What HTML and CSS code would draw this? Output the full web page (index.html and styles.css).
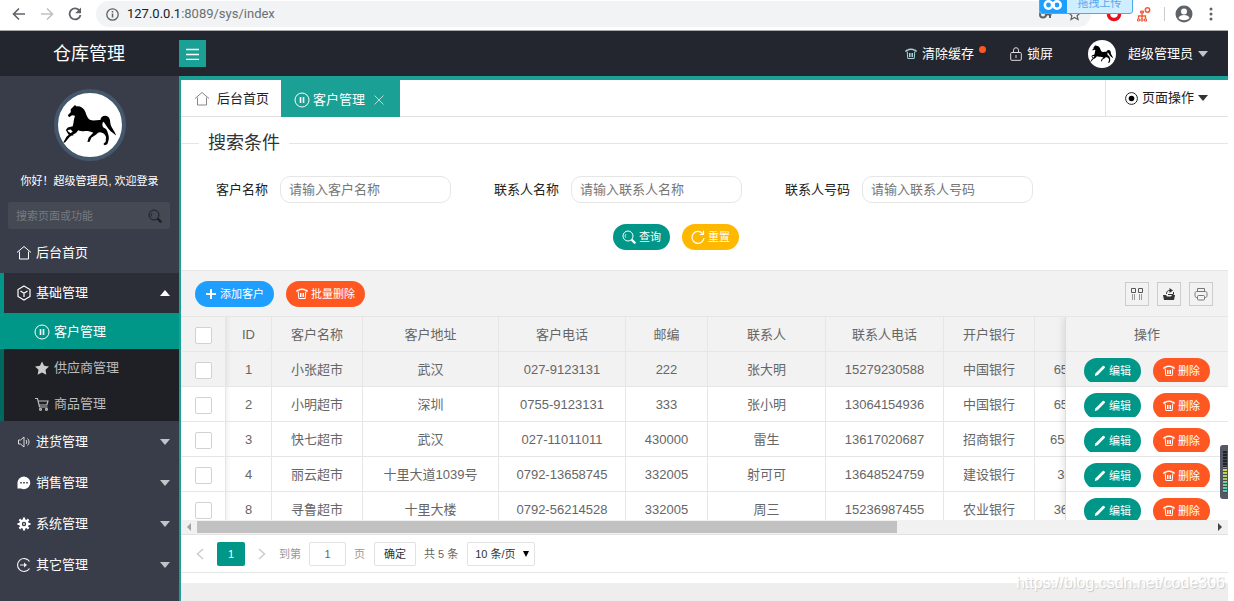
FILE: index.html
```html
<!DOCTYPE html>
<html lang="zh-CN">
<head>
<meta charset="utf-8">
<title>仓库管理</title>
<link rel="stylesheet" href="styles.css">
</head>
<body>
<svg class="defs" aria-hidden="true">
  <symbol id="horse" viewBox="170 38 196 196"><path d="M222 75l5 4c12-1 22 5 27 17 3 10 7 20 15 25 11 3 22-1 31 0 0-8 6-13 15-13 11 1 15 10 15 21 2 15 12 21 18 39-12-8-23-17-29-28-5-7-6-12-11-14-3 5-3 13 1 18 9 4 12 9 14 18 3 8 4 15 1 24l-3 9-8 3-4-4 7-7 1-14c-3-10-10-14-18-15-6 0-9 3-12 7l-15 10-5 12-7 1 4-14 14-14c-8-4-18-6-28-5-8 0-13-1-18-3l-6 8-20 12-14 17-7 3 11-20 19-16-6-6-10 1 3 6 14 9 1 3-15-4-8-14 6-7 15-4c3-9 3-20 7-32l-9-2-9 6-4-6 9-9 0-9z"/></symbol>
  <symbol id="home" viewBox="0 0 16 16"><path d="M1 7.500L8 1.500l7 6M3.500 6.500v7.500h9V6.500" fill="none" stroke="currentColor"/></symbol>
  <symbol id="pause" viewBox="0 0 16 16"><circle cx="8" cy="8" r="7" fill="none" stroke="currentColor"/><path d="M6.500 5v6M9.500 5v6" stroke="currentColor" stroke-width="1.600"/></symbol>
  <symbol id="trash" viewBox="0 0 12 12"><path d="M2.200 3.500l.6 7h6.400l.6-7M4.500 5v4M6 5v4M7.500 5v4" fill="none" stroke="currentColor"/><path d="M.8 3.800C.8 2.500 2 2 3 2c.5-1 5.500-1 6 0 1 0 2.200.5 2.200 1.800" fill="none" stroke="currentColor" stroke-width="1.400"/></symbol>
  <symbol id="search" viewBox="0 0 14 14"><circle cx="6" cy="6" r="5" fill="none" stroke="currentColor"/><path d="M3.500 7.500a3 3 0 0 1 .5-3.500" fill="none" stroke="currentColor" stroke-width=".8"/><path d="M10.300 10.300l2.300 2.300" stroke="currentColor" stroke-width="2.400" stroke-linecap="round"/></symbol>
  <symbol id="pencil" viewBox="0 0 12 12"><path d="M.8 11.200l.8-3L9 .8c.8-.5 2.400 1 1.900 1.900L3.800 10z" fill="currentColor"/></symbol>
</svg>

<div class="browser">
  <svg class="nav-icon" viewBox="0 0 14 14"><path d="M13 7H2M7 1.500L1.500 7 7 12.500" fill="none" stroke="#5f6368" stroke-width="1.600"/></svg>
  <svg class="nav-icon" viewBox="0 0 14 14"><path d="M1 7h11M7 1.500L12.500 7 7 12.500" fill="none" stroke="#bfc1c4" stroke-width="1.600"/></svg>
  <svg class="nav-icon" viewBox="0 0 14 14"><path d="M11.800 4A5.500 5.500 0 1 0 12.500 8" fill="none" stroke="#5f6368" stroke-width="1.800"/><path d="M13 .5v5.800H7.200z" fill="#5f6368"/></svg>
  <div class="address">
    <svg width="13" height="13" viewBox="0 0 13 13"><circle cx="6.500" cy="6.500" r="5.700" fill="none" stroke="#5f6368" stroke-width="1.300"/><path d="M6.500 5.600v4M6.500 3v1.400" stroke="#5f6368" stroke-width="1.500"/></svg>
    <span class="url"><b>127.0.0.1</b>:8089/sys/index</span>
    <svg class="key" width="13" height="13" viewBox="0 0 13 13"><circle cx="4" cy="6.500" r="3" fill="none" stroke="#5f6368" stroke-width="2"/><path d="M7 6.500h5.500M11 7v3" stroke="#5f6368" stroke-width="2"/></svg>
    <svg width="13" height="13" viewBox="0 0 14 14"><path d="M7 1l1.800 4 4.200.4-3.200 2.900 1 4.200L7 10.300l-3.800 2.200 1-4.200L1 5.400 5.200 5z" fill="none" stroke="#5f6368" stroke-width="1.300"/></svg>
  </div>
  <svg width="16" height="16" viewBox="0 0 16 16"><circle cx="8" cy="8" r="5.500" fill="none" stroke="#e8101c" stroke-width="3.500"/></svg>
  <svg width="15" height="15" viewBox="0 0 15 15" fill="none" stroke="#f25a38"><circle cx="11.500" cy="3" r="2.200" stroke-width="1.500"/><path d="M6 4v3M2.500 12V9h7v3M6 7v5" stroke-width="1.300"/><path d="M4.500 4h3v2h-3zM1.500 12h2v2h-2zM5 12h2v2H5zM8.500 12h2v2h-2z"/></svg>
  <i class="bar-sep"></i>
  <svg width="18" height="18" viewBox="0 0 18 18"><circle cx="9" cy="9" r="8.500" fill="#5f6368"/><circle cx="9" cy="6.500" r="3" fill="#fff"/><path d="M3.500 13c1-4 10-4 11 0-2.500 3-8.500 3-11 0z" fill="#fff"/></svg>
  <svg class="dots" width="4" height="14" viewBox="0 0 4 14" fill="#5f6368"><circle cx="2" cy="2" r="1.500"/><circle cx="2" cy="7" r="1.500"/><circle cx="2" cy="12" r="1.500"/></svg>
  <div class="upload">
    <span class="upload-logo"><svg width="20" height="12" viewBox="0 0 20 12" fill="none" stroke="#fff" stroke-width="2.500"><circle cx="5.500" cy="7" r="3.700"/><circle cx="14" cy="7" r="3.700"/><path d="M8 4c1 0 3 5 4 5"/></svg></span>
    <span class="upload-text">拖拽上传</span>
  </div>
</div>

<header class="topbar">
  <h1 class="logo">仓库管理</h1>
  <button class="burger" aria-label="折叠菜单"><svg width="13" height="12" viewBox="0 0 13 12"><path d="M0 1.500h13M0 6.500h13M0 11.500h13" stroke="#fff" stroke-width="1.400"/></svg></button>
  <nav class="topnav">
    <a href="#" class="clear"><svg class="i12 aqua"><use href="#trash"/></svg>清除缓存<i class="dot"></i></a>
    <a href="#" class="lock"><svg width="12" height="14" viewBox="0 0 12 14" fill="none" stroke="#ddd"><rect x=".7" y="5.500" width="10.600" height="7.800" rx="1"/><path d="M3.500 5.500V3.200a2.500 2.500 0 0 1 5 0v2.300M6 8v3"/></svg>锁屏</a>
    <a href="#" class="user"><span class="face"><svg><use href="#horse"/></svg></span>超级管理员<i class="tri"></i></a>
  </nav>
</header>

<div class="layout">
  <aside class="side">
    <div class="avatar"><svg><use href="#horse"/></svg></div>
    <p class="hello">你好！超级管理员, 欢迎登录</p>
    <div class="side-search">
      <input type="text" placeholder="搜索页面或功能" aria-label="搜索页面或功能">
      <svg class="i14"><use href="#search"/></svg>
    </div>
    <nav class="menu">
      <a href="#"><svg class="i16"><use href="#home"/></svg>后台首页</a>
      <a href="#" class="open"><svg class="i16" viewBox="0 0 16 16" fill="none" stroke="#fff" stroke-width="1.200"><path d="M8 1l6 3.500v7L8 15l-6-3.500v-7zM4.500 6L8 8.200 11.500 6M8 8.200V12"/></svg>基础管理<i class="tri up"></i></a>
      <div class="sub">
        <a href="#" class="on"><svg class="i16"><use href="#pause"/></svg>客户管理</a>
        <a href="#"><svg class="i16" viewBox="0 0 16 16"><path d="M8 1.500l2.100 4.300 4.900.7-3.500 3.300.8 4.900L8 12.500l-4.300 2.200.8-4.900L1 6.500l4.900-.7z" fill="#ccc"/></svg>供应商管理</a>
        <a href="#"><svg class="i16" viewBox="0 0 16 16" fill="none" stroke="#bbb" stroke-width="1.200"><path d="M1 2.500h2.500l2 8.500h8M4.200 5H14l-1.200 4H5"/><circle cx="6.500" cy="13.300" r="1"/><circle cx="12.500" cy="13.300" r="1"/></svg>商品管理</a>
      </div>
      <a href="#"><svg class="i16" viewBox="0 0 16 16" fill="none" stroke="#ddd"><path d="M2.500 6h2L8 3v10L4.500 10h-2zM10 6c1 1 1 3 0 4M11.500 4.500c2 2 2 5 0 7"/></svg>进货管理<i class="tri"></i></a>
      <a href="#"><svg class="i16" viewBox="0 0 16 16"><path d="M8 1.500a6.500 6.300 0 1 1-3 12H1.500v-6A6.500 6.300 0 0 1 8 1.500z" fill="#fff"/><path d="M4.200 7.800h1.600M7.200 7.800h1.600M10.200 7.800h1.600" stroke="#393d49" stroke-width="1.500"/></svg>销售管理<i class="tri"></i></a>
      <a href="#"><svg class="i16" viewBox="0 0 16 16" fill="none" stroke="#fff"><circle cx="8" cy="8" r="3.500" stroke-width="2.600"/><path d="M8 1.500v2.500M8 12v2.500M1.500 8H4M12 8h2.500M3.400 3.400l1.800 1.800M10.800 10.800l1.800 1.800M3.400 12.600l1.800-1.800M10.800 5.200l1.800-1.800" stroke-width="2.200"/><circle cx="8" cy="8" r=".5"/></svg>系统管理<i class="tri"></i></a>
      <a href="#"><svg class="i16" viewBox="0 0 16 16" fill="none" stroke="#eee" stroke-width="1.200"><path d="M13.500 4.500a6.500 6.500 0 1 0 0 7M4 8h5"/><path d="M8 5.500L11 8l-3 2.500z" fill="#eee" stroke="none"/></svg>其它管理<i class="tri"></i></a>
    </nav>
  </aside>

  <main class="main">
    <div class="tabs">
      <a href="#" class="tab"><svg class="i16 soft"><use href="#home"/></svg>后台首页</a>
      <a href="#" class="tab active"><svg class="i16"><use href="#pause"/></svg>客户管理<svg class="close" width="10" height="10" viewBox="0 0 10 10"><path d="M.5.5l9 9M9.500.5l-9 9" stroke="#b9d9d6"/></svg></a>
      <a href="#" class="page-op"><svg width="13" height="13" viewBox="0 0 13 13"><circle cx="6.500" cy="6.500" r="5.900" fill="none" stroke="#222"/><circle cx="6.500" cy="6.500" r="2.800"/></svg>页面操作<i class="tri dark"></i></a>
    </div>

    <form class="search">
      <h2 class="legend">搜索条件</h2>
      <div class="fields">
        <label for="cname">客户名称</label><input id="cname" type="text" placeholder="请输入客户名称">
        <label for="pname">联系人名称</label><input id="pname" type="text" placeholder="请输入联系人名称">
        <label for="pphone">联系人号码</label><input id="pphone" type="text" placeholder="请输入联系人号码">
      </div>
      <div class="actions">
        <button type="button" class="btn green"><svg class="i14"><use href="#search"/></svg>查询</button>
        <button type="button" class="btn amber"><svg class="i14" viewBox="0 0 14 14"><path d="M12 4A6 6 0 1 0 13 8M12.500 .8v3.700H8.800" fill="none" stroke="#fff" stroke-width="1.200"/></svg>重置</button>
      </div>
    </form>

    <div class="toolbar">
      <button class="btn blue"><svg class="i12" viewBox="0 0 12 12"><path d="M6 1v10M1 6h10" stroke="#fff" stroke-width="2"/></svg>添加客户</button>
      <button class="btn red"><svg class="i12"><use href="#trash"/></svg>批量删除</button>
      <div class="tools">
        <button aria-label="筛选列"><svg width="14" height="14" viewBox="0 0 14 14" fill="none" stroke="#555"><path d="M1.500 1.500h4v4h-4zM8.500 1.500h4v4h-4z"/><path d="M2.500 7v6M4.500 7v6M9.500 7v6M11.500 7v6" stroke="#999"/></svg></button>
        <button aria-label="导出"><svg width="14" height="14" viewBox="0 0 14 14"><path d="M1 8h3l1 1.500h4L10 8h3l-1 5H2z" fill="#333"/><path d="M4.500 7C4.500 4 6 3.500 8 3.500" fill="none" stroke="#333"/><path d="M7.500 1L11 3.500 7.500 6z" fill="#333"/><path d="M6 7.500h5.500V5" fill="none" stroke="#333"/></svg></button>
        <button aria-label="打印"><svg width="14" height="14" viewBox="0 0 14 14" fill="none" stroke="#777"><path d="M3.500 4.500v-3h7v3M3.500 10.500h-1c-1 0-1.500-1-1.500-2V6.500c0-1 .5-2 1.500-2h9c1 0 1.500 1 1.500 2v2c0 1-.5 2-1.500 2h-1"/><rect x="3.500" y="8.500" width="7" height="4.500" rx="1"/></svg></button>
      </div>
    </div>

    <div class="grid">
      <div class="grid-scroll">
        <table class="data">
          <colgroup><col class="c45"><col class="c46"><col class="c91"><col class="c136"><col class="c127"><col class="c82"><col class="c118"><col class="c118"><col class="c91"><col class="c60"></colgroup>
          <thead><tr><th><input type="checkbox" aria-label="全选"></th><th>ID</th><th>客户名称</th><th>客户地址</th><th>客户电话</th><th>邮编</th><th>联系人</th><th>联系人电话</th><th>开户银行</th><th></th></tr></thead>
          <tbody>
            <tr class="hover"><td><input type="checkbox" aria-label="选择 1"></td><td>1</td><td>小张超市</td><td>武汉</td><td>027-9123131</td><td>222</td><td>张大明</td><td>15279230588</td><td>中国银行</td><td>654</td></tr>
            <tr><td><input type="checkbox" aria-label="选择 2"></td><td>2</td><td>小明超市</td><td>深圳</td><td>0755-9123131</td><td>333</td><td>张小明</td><td>13064154936</td><td>中国银行</td><td>654</td></tr>
            <tr><td><input type="checkbox" aria-label="选择 3"></td><td>3</td><td>快七超市</td><td>武汉</td><td>027-11011011</td><td>430000</td><td>雷生</td><td>13617020687</td><td>招商银行</td><td>6543</td></tr>
            <tr><td><input type="checkbox" aria-label="选择 4"></td><td>4</td><td>丽云超市</td><td>十里大道1039号</td><td>0792-13658745</td><td>332005</td><td>射可可</td><td>13648524759</td><td>建设银行</td><td>36</td></tr>
            <tr><td><input type="checkbox" aria-label="选择 8"></td><td>8</td><td>寻鲁超市</td><td>十里大楼</td><td>0792-56214528</td><td>332005</td><td>周三</td><td>15236987455</td><td>农业银行</td><td>365</td></tr>
          </tbody>
        </table>
      </div>
      <div class="grid-fixed">
        <table class="ops">
          <thead><tr><th>操作</th></tr></thead>
          <tbody>
            <tr class="hover"><td><div class="cell"><button class="btn green"><svg class="i12"><use href="#pencil"/></svg>编辑</button><button class="btn red"><svg class="i12"><use href="#trash"/></svg>删除</button></div></td></tr>
            <tr><td><div class="cell"><button class="btn green"><svg class="i12"><use href="#pencil"/></svg>编辑</button><button class="btn red"><svg class="i12"><use href="#trash"/></svg>删除</button></div></td></tr>
            <tr><td><div class="cell"><button class="btn green"><svg class="i12"><use href="#pencil"/></svg>编辑</button><button class="btn red"><svg class="i12"><use href="#trash"/></svg>删除</button></div></td></tr>
            <tr><td><div class="cell"><button class="btn green"><svg class="i12"><use href="#pencil"/></svg>编辑</button><button class="btn red"><svg class="i12"><use href="#trash"/></svg>删除</button></div></td></tr>
            <tr><td><div class="cell"><button class="btn green"><svg class="i12"><use href="#pencil"/></svg>编辑</button><button class="btn red"><svg class="i12"><use href="#trash"/></svg>删除</button></div></td></tr>
          </tbody>
        </table>
      </div>
    </div>
    <div class="hscroll"><i class="arrow left"></i><div class="track"><div class="thumb"></div></div><i class="arrow right"></i></div>

    <div class="pager">
      <a href="#" class="step" aria-label="上一页"><svg width="8" height="12" viewBox="0 0 8 12"><path d="M7 1L1.500 6 7 11" fill="none" stroke="#ccc" stroke-width="1.500"/></svg></a>
      <a href="#" class="current">1</a>
      <a href="#" class="step" aria-label="下一页"><svg width="8" height="12" viewBox="0 0 8 12"><path d="M1 1l5.500 5L1 11" fill="none" stroke="#ccc" stroke-width="1.500"/></svg></a>
      <label class="jump">到第<input type="text" value="1">页</label>
      <button class="ok">确定</button>
      <span class="count">共 5 条</span>
      <span class="size"><select aria-label="每页条数"><option>10 条/页</option></select><i></i></span>
    </div>
    <footer class="foot"></footer>
  </main>
</div>
<div class="meter"><i></i></div>
<div class="mark">https://blog.csdn.net/code306</div>
</body>
</html>
```
FILE: styles.css
```css
* { box-sizing: border-box; }
body {
  margin: 0; padding-right: 6px; height: 100vh; overflow: hidden;
  display: flex; flex-direction: column; position: relative; background: #fff;
  font: 13px/20px "Liberation Sans", "Noto Sans CJK SC", sans-serif; color: #333;
}
a { color: inherit; text-decoration: none; }
button, input, select { font: inherit; color: inherit; margin: 0; padding: 0; }
h1, h2, p { margin: 0; font-weight: 400; }
svg { flex: none; display: block; }
.defs { position: absolute; width: 0; height: 0; }
.i12 { width: 12px; height: 12px; }
.i14 { width: 14px; height: 14px; }
.i16 { width: 16px; height: 16px; }

/* browser bar */
.browser {
  position: relative; flex: none; height: 31px; padding: 0 16px 2px 12px;
  display: flex; align-items: center; gap: 15px; border-bottom: 1px solid #a9a9ac;
}
.nav-icon { width: 14px; height: 14px; }
.address {
  flex: 1; height: 26px; padding: 0 10px; border-radius: 13px;
  background: #f1f3f4; display: flex; align-items: center; gap: 8px;
}
.url { font-family: Roboto, sans-serif; color: #6b6f73; }
.url b { font-weight: 400; color: #202124; }
.key { margin-left: auto; }
.address .key + svg { margin-left: 8px; }
.browser > svg { margin-right: -1px; }
.bar-sep { width: 1px; height: 14px; background: #ccc; margin: 0 -5px 0 -1px; }
.browser .dots { margin-left: 2px; }
.upload {
  position: absolute; top: -10px; right: 95px; width: 94px; height: 24px; display: flex;
  border: 1px solid #4ea9f5; border-radius: 3px; background: #cfeeff; overflow: hidden;
}
.upload-logo { width: 27px; padding: 7px 3px; background: #1e9fff; }
.upload-text { flex: 1; text-align: center; font-size: 11px; line-height: 24px; color: #56a9ee; }

/* header */
.topbar { flex: none; height: 45px; display: flex; align-items: center; background: #23262e; color: #fff; }
.logo { width: 178px; margin-right: 1px; text-align: center; font-size: 18px; line-height: 26px; }
.burger { width: 27px; height: 27px; border: 0; background: #1aa094; display: grid; place-items: center; }
.topnav { margin-left: auto; display: flex; align-items: center; padding-right: 20px; }
.topnav a { display: flex; align-items: center; gap: 5px; }
.aqua { color: #a9d5da; }
.dot { width: 7px; height: 7px; border-radius: 50%; background: #ff5722; margin-bottom: 8px; }
.lock { margin-left: 24px; }
.user { margin-left: 35px; }
.face { width: 28px; height: 28px; border-radius: 50%; background: #fff; overflow: hidden; margin-right: 7px; }
.face svg { width: 28px; height: 28px; }
.tri { border: 5px solid transparent; border-top: 6px solid #c2c4c8; border-bottom: 0; }
.tri.up { border-top: 0; border-bottom: 6px solid #fff; }
.tri.dark { border-top-color: #333; }

/* sidebar */
.layout { flex: 1; min-height: 0; display: flex; }
.side { width: 179px; flex: none; background: #393d49; color: #fff; overflow: hidden; }
.avatar { width: 72px; height: 72px; margin: 13px auto 0; border: 4px solid #44576b; border-radius: 50%; background: #fff; overflow: hidden; }
.avatar svg { width: 64px; height: 64px; }
.hello { margin: 10px 0 11px; text-align: center; font-size: 11px; }
.side-search { height: 27px; margin: 0 9px 4px 8px; padding: 0 8px; display: flex; align-items: center; background: #454954; border-radius: 2px; color: #1d1f25; }
.side-search input { flex: 1; min-width: 0; border: 0; background: none; font-size: 11px; outline: 0; }
.side-search input::placeholder { color: #777a80; }
.menu a { display: flex; align-items: center; height: 40px; padding: 0 9px 0 16px; gap: 4px; }
.menu .sub ~ a { height: 41px; }
.menu .tri { margin-left: auto; }
.menu .open { background: #2b2e37; border-left: 4px solid #009688; padding-left: 12px; }
.menu .sub { background: #1f2025; border-left: 4px solid #00695f; }
.menu .sub a { height: 36px; padding: 2px 9px 0 30px; color: #bbb; }
.menu .sub .on { background: #009688; color: #fff; margin-left: -4px; padding-left: 34px; }

/* tabs */
.main { flex: 1; min-width: 0; display: flex; flex-direction: column; border-left: 2px solid #1aa094; border-top: 4px solid #1aa094; background: #fff; }
.tabs { flex: none; height: 37px; display: flex; border-bottom: 1px solid #e2e2e2; color: #222; }
.tab { display: flex; align-items: center; gap: 7px; padding: 2px 12px 0 13px; }
.tab .soft { color: #888; }
.tab.active { height: 37px; gap: 3px; background: #1aa094; color: #fff; padding-right: 16px; }
.close { margin-left: 6px; }
.page-op { margin-left: auto; border-left: 1px solid #e2e2e2; display: flex; align-items: center; gap: 4px; padding: 0 20px 0 19px; }

/* search form */
.search { flex: none; height: 153px; }
.legend { display: flex; align-items: center; gap: 9px; font-size: 18px; line-height: 26px; padding-top: 13px; color: #333; }
.legend::before, .legend::after { content: ""; height: 1px; background: #e6e6e6; width: 18px; }
.legend::after { flex: 1; width: auto; }
.fields { display: flex; align-items: center; padding: 20px 0 0 35px; color: #222; }
.fields input { width: 171px; height: 27px; margin: 0 43px 0 12px; padding: 0 8px; border: 1px solid #e6e6e6; border-radius: 10px; outline: 0; }
.fields input::placeholder { color: #777; }
.actions { display: flex; justify-content: center; gap: 12px; padding: 21px 57px 0 0; }
.btn { display: inline-flex; align-items: center; justify-content: center; gap: 3px; height: 26px; padding: 0 9px; border: 0; border-radius: 13px; color: #fff; font-size: 11px; flex: none; }
.green { background: #009688; }
.amber { background: #ffb800; }
.blue { background: #1e9fff; }
.red { background: #ff5722; }

/* table */
.toolbar { flex: none; height: 47px; display: flex; align-items: center; gap: 12px; padding: 0 15px 0 14px; background: #f2f2f2; border: solid #e6e6e6; border-width: 1px 0; }
.toolbar .btn { padding: 0 10px; }
.tools { margin-left: auto; display: flex; gap: 8px; }
.tools button { width: 24px; height: 24px; border: 1px solid #ccc; background: none; display: grid; place-items: center; }
.grid { flex: 1; min-height: 0; overflow: hidden; display: flex; color: #666; }
.grid-scroll { flex: 1; min-width: 0; overflow: hidden; }
.grid-fixed { width: 163px; flex: none; border-left: 1px solid #ddd; box-shadow: -1px 0 8px rgba(0, 0, 0, .12); position: relative; background: #fff; }
table { table-layout: fixed; border-collapse: separate; border-spacing: 0; }
.data { width: 914px; }
.ops { width: 100%; }
.c45 { width: 45px; }
.c46 { width: 46px; }
.c60 { width: 60px; }
.c82 { width: 82px; }
.c91 { width: 91px; }
.c118 { width: 118px; }
.c127 { width: 127px; }
.c136 { width: 136px; }
th, td { height: 35px; padding: 2px 0 0; text-align: center; font-weight: 400; border: solid #e6e6e6; border-width: 0 1px 1px 0; white-space: nowrap; }
.ops th, .ops td { border-right: 0; }
th, .hover td { background: #f2f2f2; }
.data th:nth-child(2), .data td:nth-child(2) { box-shadow: inset 5px 0 5px -4px rgba(0, 0, 0, .08); }
input[type=checkbox] { appearance: none; display: block; width: 17px; height: 17px; margin: 0 auto; border: 1px solid #d2d2d2; border-radius: 2px; background: #fff; }
.cell { display: flex; justify-content: center; gap: 12px; height: 24px; overflow: hidden; }
.cell .btn { width: 57px; }

.hscroll { flex: none; height: 15px; display: flex; align-items: center; background: #f1f1f1; border-bottom: 1px solid #e2e2e2; }
.arrow { width: 16px; height: 8px; display: flex; justify-content: center; }
.arrow::before { content: ""; border: 4px solid transparent; }
.arrow.left::before { border-right-color: #a0a0a0; border-left: 0; }
.arrow.right::before { border-left-color: #444; border-right: 0; }
.track { flex: 1; }
.thumb { width: 69%; height: 12px; background: #c1c1c1; }

/* pager */
.pager { flex: none; height: 38px; padding: 0 15px; display: flex; align-items: center; font-size: 11px; border-bottom: 1px solid #e6e6e6; }
.current { width: 28px; height: 24px; margin: 0 13px; line-height: 24px; text-align: center; color: #fff; background: #009688; border-radius: 2px; }
.jump { display: flex; align-items: center; margin-left: 13px; color: #999; }
.jump input { width: 37px; height: 24px; margin: 0 8px; text-align: center; color: #666; border: 1px solid #e2e2e2; border-radius: 2px; }
.ok { width: 42px; height: 24px; margin: 0 8px 0 9px; border: 1px solid #e2e2e2; border-radius: 2px; background: #fff; }
.count { color: #666; }
.size { display: grid; align-items: center; margin-left: 9px; }
.size select { grid-area: 1 / 1; width: 68px; height: 24px; padding: 0 7px; appearance: none; border: 1px solid #e2e2e2; border-radius: 2px; background: #fff; }
.size i { grid-area: 1 / 1; justify-self: end; margin-right: 6px; border: 3px solid transparent; border-top: 6px solid #000; border-bottom: 0; }
.foot { flex: none; height: 28px; border-top: 10px solid #fff; background: #eee; }

/* overlays */
.meter { position: absolute; right: 6px; top: 445px; width: 8px; height: 54px; padding: 6px 1px 6px 3px; background: #535766; border-radius: 3px 0 0 3px; }
.meter i { display: block; height: 42px; background: repeating-linear-gradient(transparent 0 2px, #474b58 2px 3px), linear-gradient(#222 0 38%, #e6d84c 40%, #9fce6a 65%, #3ecfc0); }
.mark { position: absolute; right: 9px; bottom: 8px; font-size: 16px; line-height: 20px; color: #fff; text-shadow: 1px 1px 1px #c8c8c8; }
```
